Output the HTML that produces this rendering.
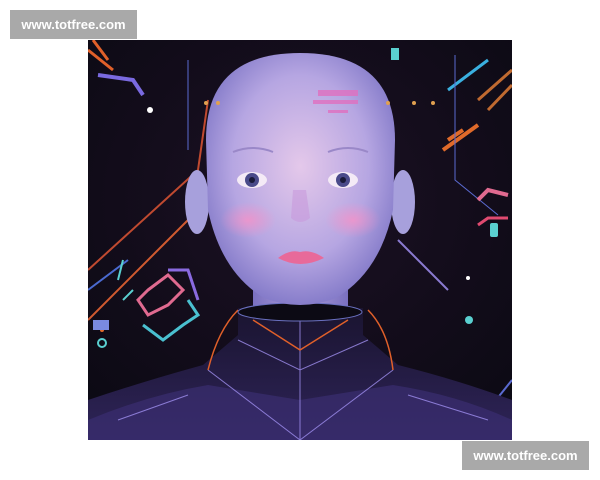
<!DOCTYPE html>
<html><head><style>
html,body{margin:0;padding:0;background:#fff;width:600px;height:480px;overflow:hidden;position:relative;font-family:"Liberation Sans",sans-serif}
.wm{position:absolute;background:#a9a9a9;color:#fff;font-size:13px;font-weight:bold;width:127px;height:29px;line-height:29px;text-align:center}
svg{position:absolute;left:88px;top:40px}
</style></head><body>
<svg width="424" height="400" viewBox="0 0 424 400">
<defs>
<radialGradient id="bg" cx="50%" cy="40%" r="70%"><stop offset="0" stop-color="#1c1024"/><stop offset="1" stop-color="#0c0a14"/></radialGradient>
<radialGradient id="skin" cx="50%" cy="45%" r="60%"><stop offset="0" stop-color="#e4c8ea"/><stop offset="0.6" stop-color="#b6a6e2"/><stop offset="1" stop-color="#7a72c4"/></radialGradient>
<radialGradient id="cheek" cx="50%" cy="50%" r="50%"><stop offset="0" stop-color="#ff8fc4" stop-opacity=".7"/><stop offset="1" stop-color="#ff8fc4" stop-opacity="0"/></radialGradient>
<linearGradient id="body" x1="0" y1="0" x2="0" y2="1"><stop offset="0" stop-color="#1a1430"/><stop offset="1" stop-color="#2e2458"/></linearGradient>
<linearGradient id="neck" x1="0" y1="0" x2="1" y2="0"><stop offset="0" stop-color="#7a70c0"/><stop offset=".5" stop-color="#b0a0dc"/><stop offset="1" stop-color="#7a70c0"/></linearGradient>
</defs>
<rect width="424" height="400" fill="url(#bg)"/>
<g fill="none" stroke-width="2">
<path d="M0 10 L25 30 M5 0 L20 20" stroke="#e0602a" stroke-width="3"/>
<path d="M10 35 L45 40 L55 55" stroke="#7a6ae0" stroke-width="4"/>
<path d="M0 230 L110 130 L120 60" stroke="#c04a30"/>
<path d="M0 280 L100 180" stroke="#d05a30"/>
<path d="M0 250 L40 220" stroke="#4a6ad0"/>
<path d="M100 20 L100 110" stroke="#5a6ad0" stroke-width="1"/>
<path d="M30 240 L35 220 M35 260 L45 250" stroke="#5ad0d0"/>
<path d="M60 250 L80 235 L95 250 L80 265 L60 275 L50 260 Z" stroke="#e06a90" stroke-width="3"/>
<path d="M55 285 L75 300 L95 285 L110 275 L100 260" stroke="#4ac0d0" stroke-width="3"/>
<path d="M80 230 L100 230 L110 260" stroke="#8a6ae0" stroke-width="3"/>
<path d="M355 110 L390 85 M360 100 L375 90" stroke="#e06a2a" stroke-width="4"/>
<path d="M360 50 L400 20" stroke="#3ab0e0" stroke-width="3"/>
<path d="M367 15 L367 140 L410 175" stroke="#5a6ad0" stroke-width="1"/>
<path d="M390 160 L400 150 L420 155" stroke="#e06a90" stroke-width="4"/>
<path d="M390 185 L400 178 L420 178" stroke="#e04a70" stroke-width="3"/>
<path d="M390 60 L424 30 M400 70 L424 45" stroke="#c06a30" stroke-width="3"/>
<path d="M310 200 L360 250" stroke="#8a7ad0" stroke-width="2"/>
<path d="M400 370 L424 340" stroke="#5a6ad0"/>
</g>
<g fill="#5ad0d0"><circle cx="14" cy="303" r="4" fill="none" stroke="#5ad0d0" stroke-width="2"/><circle cx="381" cy="280" r="4"/><rect x="402" y="183" width="8" height="14" rx="2"/><rect x="303" y="8" width="8" height="12"/><circle cx="380" cy="238" r="2" fill="#fff"/><circle cx="62" cy="70" r="3" fill="#fff"/><circle cx="14" cy="290" r="2" fill="#e06a2a"/></g>
<rect x="5" y="280" width="16" height="10" fill="#7a8ae0"/>
<rect x="165" y="225" width="95" height="55" fill="url(#neck)"/>
<path d="M0 400 L0 360 Q60 340 115 325 L150 295 L150 268 L275 268 L275 295 L310 325 Q370 340 424 360 L424 400 Z" fill="url(#body)"/>
<path d="M0 380 Q60 355 120 345 L212 360 L305 345 Q370 355 424 380 L424 400 L0 400 Z" fill="#3a2e70" opacity=".7"/>
<g stroke="#a090f0" stroke-width="1" fill="none" opacity=".8">
<path d="M150 300 L212 330 L280 300 M212 280 L212 400 M120 330 L212 400 L305 330 M30 380 L100 355 M320 355 L400 380"/>
</g>
<g stroke="#e0602a" stroke-width="1.5" fill="none"><path d="M120 330 Q130 290 150 270 M305 330 Q300 290 280 270 M165 280 L212 310 L260 280"/></g>
<ellipse cx="212" cy="272" rx="62" ry="9" fill="#0c0a14" stroke="#6a70c0"/>
<ellipse cx="109" cy="162" rx="12" ry="32" fill="#a7a0dc"/>
<ellipse cx="315" cy="162" rx="12" ry="32" fill="#a7a0dc"/>
<path d="M118 100 Q118 13 212 13 Q307 13 307 100 L305 170 Q292 232 248 258 Q212 272 176 258 Q133 232 120 170 Z" fill="url(#skin)"/>
<ellipse cx="160" cy="180" rx="28" ry="18" fill="url(#cheek)"/>
<ellipse cx="265" cy="180" rx="28" ry="18" fill="url(#cheek)"/>
<path d="M145 112 Q165 104 185 112 M240 112 Q260 104 280 112" stroke="#9a88c8" stroke-width="2" fill="none"/>
<ellipse cx="164" cy="140" rx="15" ry="8" fill="#f4eaf6"/><circle cx="164" cy="140" r="7" fill="#4a4a8a"/><circle cx="164" cy="140" r="3" fill="#1a1a3a"/>
<ellipse cx="255" cy="140" rx="15" ry="8" fill="#f4eaf6"/><circle cx="255" cy="140" r="7" fill="#4a4a8a"/><circle cx="255" cy="140" r="3" fill="#1a1a3a"/>
<path d="M205 150 L203 178 Q212 186 222 178 L218 150" fill="#c89adc" opacity=".6"/>
<path d="M190 218 Q202 209 212 212 Q223 209 236 218 Q212 230 190 218 Z" fill="#e86a9a"/>
<g fill="#e070c0" opacity=".8"><rect x="230" y="50" width="40" height="6"/><rect x="225" y="60" width="45" height="4"/><rect x="240" y="70" width="20" height="3"/></g>
<g fill="#e0a050"><circle cx="118" cy="63" r="2"/><circle cx="300" cy="63" r="2"/><circle cx="326" cy="63" r="2"/><circle cx="345" cy="63" r="2"/><circle cx="130" cy="63" r="2"/></g>
</svg>
<div class="wm" style="left:10px;top:10px">www.totfree.com</div>
<div class="wm" style="left:462px;top:441px">www.totfree.com</div>
</body></html>
